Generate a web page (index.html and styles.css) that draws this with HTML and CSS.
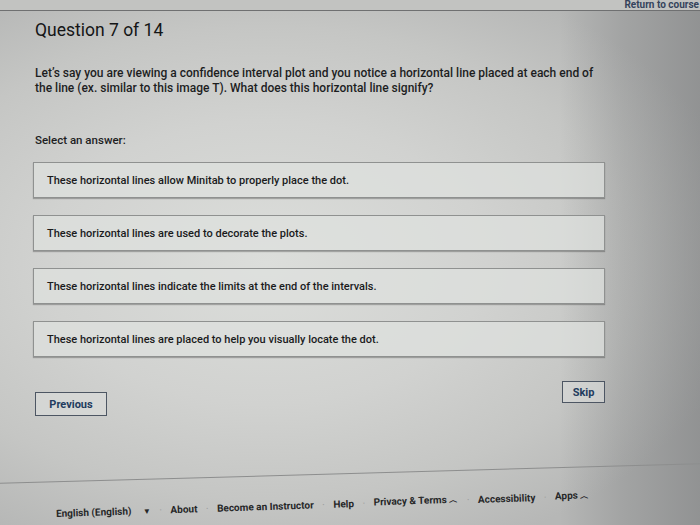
FILE: index.html
```html
<!DOCTYPE html>
<html lang="en">
<head>
<meta charset="utf-8">
<title>Question 7 of 14</title>
<link rel="stylesheet" href="styles.css">
</head>
<body>
<div class="page">
  <header class="topbar">
    <a class="return-link" href="#">Return to course</a>
  </header>
  <main class="quiz">
    <h1 class="title">Question 7 of 14</h1>
    <p class="prompt">Let’s say you are viewing a confidence interval plot and you notice a horizontal line placed at each end of the line (ex. similar to this image T). What does this horizontal line signify?</p>
    <p class="select-label">Select an answer:</p>
    <ul class="options">
      <li class="option">These horizontal lines allow Minitab to properly place the dot.</li>
      <li class="option">These horizontal lines are used to decorate the plots.</li>
      <li class="option">These horizontal lines indicate the limits at the end of the intervals.</li>
      <li class="option">These horizontal lines are placed to help you visually locate the dot.</li>
    </ul>
    <div class="actions">
      <button class="btn btn-prev">Previous</button>
      <button class="btn btn-skip">Skip</button>
    </div>
  </main>
  <footer class="footer">
    <div class="footer-links">
      <span class="lang">English (English) <span class="tri">▼</span></span>
      <span class="sep">·</span>
      <span>About</span>
      <span class="sep">·</span>
      <span>Become an Instructor</span>
      <span class="sep">·</span>
      <span>Help</span>
      <span class="sep">·</span>
      <span>Privacy &amp; Terms <span class="caret">︿</span></span>
      <span class="sep">·</span>
      <span>Accessibility</span>
      <span class="sep">·</span>
      <span>Apps <span class="caret">︿</span></span>
    </div>
  </footer>
</div>
</body>
</html>
```

FILE: styles.css
```css
* { box-sizing: border-box; }

html, body {
  margin: 0;
  padding: 0;
  height: 100%;
}

body {
  font-family: Roboto, "Liberation Sans", Arial, sans-serif;
  color: #1d1e1f;
  background: #c6c7c5;
  overflow: hidden;
}

.page {
  width: 700px;
  height: 525px;
  display: flex;
  flex-direction: column;
  background:
    linear-gradient(90deg, rgba(0,0,0,0) 0%, rgba(0,0,0,0) 80%, rgba(60,62,66,0.16) 89%, rgba(60,62,66,0.30) 100%),
    radial-gradient(ellipse 70% 60% at 38% 50%, #dcdedb 0%, #d1d2d0 45%, #c5c6c4 75%, #b6b7b6 100%);
}

.topbar {
  height: 11px;
  border-bottom: 1px solid #6f7071;
  background: #c2c3c1;
  display: flex;
  justify-content: flex-end;
}

.return-link {
  font-size: 10px;
  font-weight: 700;
  line-height: 10px;
  color: #35435c;
  text-decoration: none;
  margin-right: 1px;
  white-space: nowrap;
}

.quiz {
  padding: 8px 0 0 35px;
  width: 605px;
}

.title {
  margin: 0;
  font-size: 17.5px;
  font-weight: 400;
  line-height: 22px;
  color: #141516;
}

.prompt {
  margin: 25px 0 0;
  font-size: 12px;
  font-weight: 500;
  line-height: 15px;
  width: 566px;
  color: #1d1e1f;
}

.select-label {
  margin: 36px 0 0;
  font-size: 11.5px;
  font-weight: 500;
  line-height: 16px;
}

.options {
  list-style: none;
  margin: 14px 0 0 -2px;
  padding: 0;
  display: flex;
  flex-direction: column;
  gap: 17px;
}

.option {
  height: 36px;
  display: flex;
  align-items: center;
  padding-left: 13px;
  font-size: 11px;
  font-weight: 500;
  color: #1a1b1c;
  background: rgba(222, 224, 221, 0.75);
  border: 1px solid #8f9190;
  box-shadow: 0 1px 1px rgba(0,0,0,0.25);
}

.actions {
  margin-top: 24px;
  display: flex;
  justify-content: space-between;
  align-items: flex-start;
}

.btn {
  font-family: Roboto, "Liberation Sans", Arial, sans-serif;
  font-size: 11px;
  font-weight: 700;
  color: #223c5e;
  background: rgba(220, 222, 220, 0.6);
  border: 1px solid #4d5663;
  padding: 0;
  cursor: pointer;
}

.btn-prev {
  width: 72px;
  height: 24px;
  margin-top: 11px;
}

.btn-skip {
  width: 43px;
  height: 22px;
}

.footer {
  margin-top: auto;
  height: 52px;
  position: relative;
}

.footer::before {
  content: "";
  position: absolute;
  left: -10px;
  right: -10px;
  top: 0;
  border-top: 1px solid #8d8e8e;
  transform: rotate(-1.6deg);
}

.footer-links {
  padding: 34px 0 0 56px;
  display: flex;
  align-items: center;
  gap: 8.5px;
  font-size: 10px;
  font-weight: 700;
  color: #262728;
  transform: rotate(-1.9deg);
  transform-origin: 56px 40px;
}

.sep {
  color: #9a9b9b;
  font-weight: 400;
}

.tri {
  font-size: 8px;
  margin-left: 9px;
}

.caret {
  font-size: 9px;
  font-weight: 700;
}
```
